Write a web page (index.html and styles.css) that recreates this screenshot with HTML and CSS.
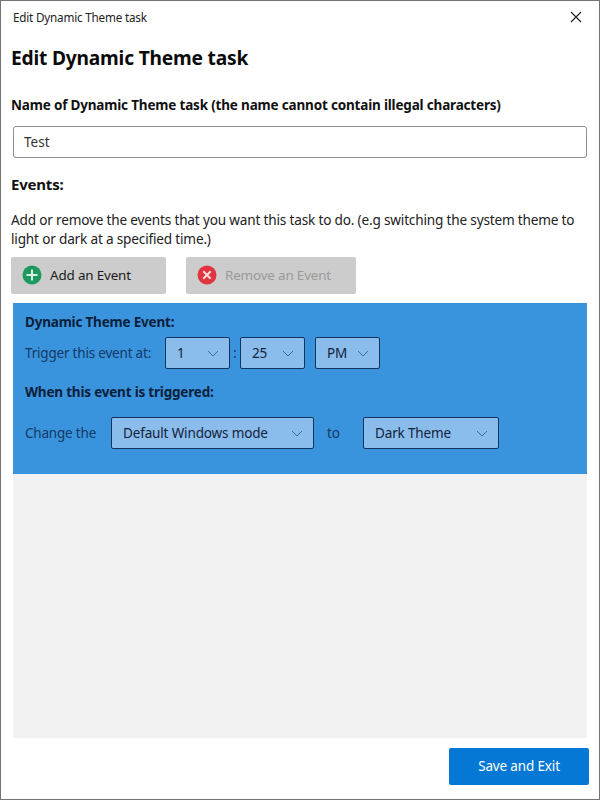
FILE: index.html
```html
<!DOCTYPE html>
<html lang="en">
<head>
<meta charset="utf-8">
<title>Edit Dynamic Theme task</title>
<link rel="stylesheet" href="styles.css">
</head>
<body>
<div class="window">
  <header class="titlebar">
    <span class="title">Edit Dynamic Theme task</span>
    <svg class="close" width="12" height="12" viewBox="0 0 12 12"><path d="M1 1l10 10M11 1L1 11" stroke="#222" stroke-width="1.2" fill="none"/></svg>
  </header>
  <main class="content">
    <h1>Edit Dynamic Theme task</h1>
    <label class="name-label">Name of Dynamic Theme task (the name cannot contain illegal characters)</label>
    <div class="textbox">Test</div>
    <h2>Events:</h2>
    <p class="desc">Add or remove the events that you want this task to do. (e.g switching the system theme to light or dark at a specified time.)</p>
    <div class="actions">
      <div class="btn btn-add">
        <svg width="20" height="20" viewBox="0 0 20 20"><circle cx="10" cy="10" r="9.5" fill="#1b9a5c"/><path d="M10 4.5v11M4.5 10h11" stroke="#d8f3e4" stroke-width="2" fill="none"/></svg>
        <span>Add an Event</span>
      </div>
      <div class="btn btn-remove">
        <svg width="20" height="20" viewBox="0 0 20 20"><circle cx="10" cy="10" r="9.5" fill="#e0353f"/><path d="M6.3 6.3l7.4 7.4M13.7 6.3l-7.4 7.4" stroke="#f6dcdd" stroke-width="2" fill="none"/></svg>
        <span>Remove an Event</span>
      </div>
    </div>
    <section class="list">
      <div class="event">
        <div class="event-title">Dynamic Theme Event:</div>
        <div class="row row-time">
          <span class="lbl lbl-trigger">Trigger this event at:</span>
          <div class="combo c-time"><span>1</span><svg class="chev" width="12" height="7" viewBox="0 0 12 7"><path d="M1 1l5 5 5-5" stroke="#3a6a9a" stroke-width="1" fill="none"/></svg></div>
          <span class="colon">:</span>
          <div class="combo c-time"><span>25</span><svg class="chev" width="12" height="7" viewBox="0 0 12 7"><path d="M1 1l5 5 5-5" stroke="#3a6a9a" stroke-width="1" fill="none"/></svg></div>
          <div class="combo c-time c-ampm"><span>PM</span><svg class="chev" width="12" height="7" viewBox="0 0 12 7"><path d="M1 1l5 5 5-5" stroke="#3a6a9a" stroke-width="1" fill="none"/></svg></div>
        </div>
        <div class="event-title when">When this event is triggered:</div>
        <div class="row row-change">
          <span class="lbl lbl-change">Change the</span>
          <div class="combo c-mode"><span>Default Windows mode</span><svg class="chev" width="12" height="7" viewBox="0 0 12 7"><path d="M1 1l5 5 5-5" stroke="#3a6a9a" stroke-width="1" fill="none"/></svg></div>
          <span class="lbl lbl-to">to</span>
          <div class="combo c-theme"><span>Dark Theme</span><svg class="chev" width="12" height="7" viewBox="0 0 12 7"><path d="M1 1l5 5 5-5" stroke="#3a6a9a" stroke-width="1" fill="none"/></svg></div>
        </div>
      </div>
    </section>
    <footer class="footer"><div class="btn-save">Save and Exit</div></footer>
  </main>
</div>
</body>
</html>
```
FILE: styles.css
```css
* { box-sizing: border-box; }
html, body { margin: 0; padding: 0; }
body { width: 600px; height: 800px; background: #fff; font-family: "Noto Sans", "Open Sans", sans-serif; font-size: 13.5px; color: #111; overflow: hidden; }
.window { width: 600px; height: 800px; border: 1px solid #747474; display: flex; flex-direction: column; background: #fff; }
.titlebar { height: 31px; flex: none; display: flex; align-items: center; justify-content: space-between; padding: 0 17px 0 12px; }
.title { font-size: 11.7px; color: #222; letter-spacing: -0.2px; }
.close { display: block; }
.content { flex: 1; display: flex; flex-direction: column; padding: 0 10px; min-height: 0; }
h1 { margin: 12px 0 0; font-size: 19.2px; line-height: 28px; font-weight: 700; color: #0b0b0b; letter-spacing: -0.2px; }
.name-label { display: block; margin-top: 23px; font-weight: 700; font-size: 13.5px; line-height: 20px; letter-spacing: -0.18px; }
.textbox { margin: 11px 2px 0 2px; height: 32px; border: 1px solid #8e8e8e; border-radius: 3px; padding: 0 10px; line-height: 30px; font-size: 13.5px; color: #333; }
h2 { margin: 15px 0 0; font-size: 15px; line-height: 22px; font-weight: 700; letter-spacing: -0.2px; }
.desc { margin: 15px 0 0; font-size: 13.6px; line-height: 19px; color: #222; letter-spacing: -0.18px; width: 572px; }
.actions { display: flex; gap: 20px; margin-top: 9px; }
.btn { height: 37px; background: #cccccc; border-radius: 2px; display: flex; align-items: center; padding: 0 0 2px 11px; gap: 8px; font-size: 13.4px; letter-spacing: -0.15px; }
.btn-add { width: 155px; color: #1c1c1c; }
.btn-remove { width: 170px; color: #9a9a9a; }
.list { margin: 9px 2px 0 2px; height: 435px; flex: none; background: #f2f2f2; }
.event { height: 171px; background: #3a93dd; padding: 10px 12px 0; }
.event-title { font-weight: 700; font-size: 13.5px; line-height: 18px; color: #0a1f3a; letter-spacing: -0.2px; }
.row { display: flex; align-items: center; }
.row-time { margin-top: 6px; }
.lbl { font-size: 13.5px; color: #123a66; letter-spacing: -0.2px; white-space: nowrap; }
.lbl-trigger { width: 140px; }
.lbl-change { width: 86px; }
.lbl-to { width: 49px; padding-left: 13px; }
.combo { height: 32px; background: #8abcec; border: 1px solid #0f3460; border-radius: 2px; display: flex; align-items: center; justify-content: space-between; padding: 0 10px 0 11px; font-size: 13.5px; color: #12233a; letter-spacing: -0.15px; }
.c-time { width: 65px; }
.c-ampm { margin-left: 10px; }
.colon { width: 10px; text-align: center; color: #123a66; font-size: 14px; line-height: 14px; }
.when { margin-top: 14px; }
.row-change { margin-top: 16px; }
.c-mode { width: 203px; }
.c-theme { width: 136px; }
.chev { display: block; flex: none; }
.footer { display: flex; justify-content: flex-end; margin-top: 10px; }
.btn-save { width: 140px; height: 37px; background: #0478d4; border-radius: 2px; color: #fff; font-size: 13.5px; line-height: 37px; text-align: center; letter-spacing: -0.15px; }
```
